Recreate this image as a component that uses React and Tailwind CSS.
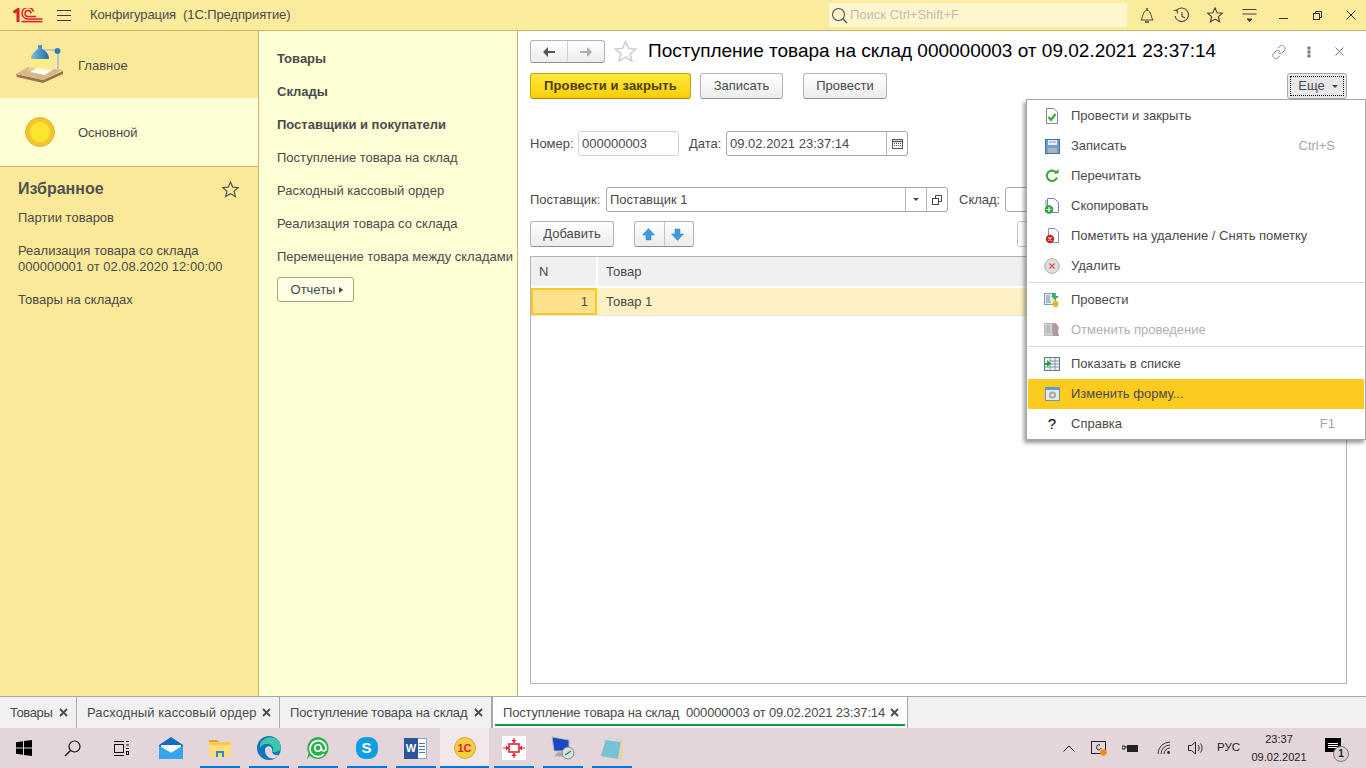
import React from 'react';

const sections = ['Поступление товара на склад', 'Расходный кассовый ордер', 'Реализация товара со склада', 'Перемещение товара между складами'];

function Logo1C() {
  return (
    <svg width="30" height="15" viewBox="0 0 30 15" fill="none" stroke="#d9232a">
      <path d="M0.5 4.5 L5 1.5 V14" strokeWidth="3" />
      <path d="M20.5 3.5 A5.8 5.8 0 1 0 14.5 11 H29.5" strokeWidth="1.6" />
      <path d="M18 5.5 A3 3 0 1 0 14.5 8.4 H23" strokeWidth="1.5" />
      <path d="M8.5 13.6 H29.5" strokeWidth="1.6" />
    </svg>
  );
}

function LampIcon() {
  return (
    <svg width="50" height="42" viewBox="0 0 50 42">
      <defs>
        <linearGradient id="glow" x1="0" y1="0" x2="0" y2="1">
          <stop offset="0" stopColor="#fff36a" />
          <stop offset="1" stopColor="#fbe99a" stopOpacity="0.3" />
        </linearGradient>
        <linearGradient id="shade" x1="0" y1="0" x2="1" y2="0">
          <stop offset="0" stopColor="#7fbfe6" />
          <stop offset="0.6" stopColor="#3d8dc4" />
          <stop offset="1" stopColor="#1f6ba3" />
        </linearGradient>
      </defs>
      <path d="M1 30 L28 36 L48 27 V30 L28 39 L2 33 Z" fill="#9a7350" />
      <path d="M1 30 L13 23 L48 26 L28 36 Z" fill="#d9b68b" />
      <path d="M15 28 L22 23.5 L38 25.5 L30 31 Z" fill="#fff" />
      <path d="M18 15 H33 L38 27 H12 Z" fill="url(#glow)" />
      <path d="M27 6 H42 M43 8 V26" stroke="#c4c4c4" strokeWidth="2" fill="none" />
      <path d="M23 1 H27 V5 C31 7 34 10 34 15 H16 C16 10 20 7 23 5 Z" fill="url(#shade)" />
      <circle cx="42.5" cy="7" r="3" fill="#2f7fb6" />
    </svg>
  );
}

function Star({ size = 18, color = '#555', fill = 'none' }) {
  return (
    <svg width={size} height={size} viewBox="0 0 24 24" fill={fill} stroke={color} strokeWidth="1.5">
      <path d="M12 2.5 L14.8 9 L21.8 9.6 L16.5 14.2 L18.1 21 L12 17.4 L5.9 21 L7.5 14.2 L2.2 9.6 L9.2 9 Z" />
    </svg>
  );
}

function TopIcon({ children }) {
  return <div className="w-[34px] h-[30px] flex items-center justify-center">{children}</div>;
}

function Btn({ children, className = '' }) {
  return (
    <div className={`h-[26px] flex items-center justify-center rounded-[3px] border border-[#b4b4b4] border-b-[#8f8f8f] bg-gradient-to-b from-white to-[#ececec] text-[#4a4a4a] ${className}`}>
      {children}
    </div>
  );
}

function MenuItem({ icon, label, hint, disabled, active }) {
  return (
    <div className={`h-[30px] flex items-center pl-[16px] pr-[29px] ${active ? 'bg-[#fbcb1f] h-[29px]' : ''}`}>
      <div className="w-[16px] h-[16px] flex items-center justify-center">{icon}</div>
      <span className={`ml-[11px] flex-1 ${disabled ? 'text-[#b0b0b0]' : 'text-[#4a4a4a]'}`}>{label}</span>
      {hint && <span className="text-[#a6a6a6]">{hint}</span>}
    </div>
  );
}

const Doc = ({ children }) => (
  <svg width="16" height="16" viewBox="0 0 16 16">
    <path d="M2.5 .5 H10 L13.5 4 V15.5 H2.5 Z" fill="#fff" stroke="#7c8794" />
    {children}
  </svg>
);

const menuIcons = {
  post: <Doc><path d="M4.5 9 L7 12 L11.5 6" stroke="#39a935" strokeWidth="2.2" fill="none" /></Doc>,
  save: (
    <svg width="15" height="15" viewBox="0 0 15 15">
      <rect x=".5" y=".5" width="14" height="14" fill="#6f9fd0" stroke="#44709f" />
      <rect x="3" y="1" width="9" height="5" fill="#e8f0f8" />
      <path d="M4 3 H11" stroke="#6f9fd0" />
      <rect x="3" y="9" width="9" height="5" fill="#a8b3bf" />
    </svg>
  ),
  reread: (
    <svg width="14" height="14" viewBox="0 0 14 14" fill="none">
      <path d="M11.5 4 A5.2 5.2 0 1 0 12 8.5" stroke="#3ca83a" strokeWidth="2.2" />
      <path d="M8.5 4.5 H13.5 V0 Z" fill="#3ca83a" />
    </svg>
  ),
  copy: (
    <svg width="16" height="16" viewBox="0 0 16 16">
      <path d="M3.5 .5 H10.5 L14.5 4.5 V14.5 H3.5 Z" fill="#fff" stroke="#7c8794" />
      <path d="M2 2 V8" stroke="#7c8794" />
      <circle cx="5" cy="11.5" r="4.3" fill="#2c9f45" />
      <path d="M5 9 V14 M2.5 11.5 H7.5" stroke="#fff" strokeWidth="1.2" />
    </svg>
  ),
  mark: (
    <svg width="16" height="16" viewBox="0 0 16 16">
      <path d="M4.5 .5 H11 L14.5 4 V14.5 H4.5 Z" fill="#fff" stroke="#8a939d" />
      <circle cx="6" cy="11" r="4.2" fill="#cc2229" />
      <path d="M4.4 9.4 L7.6 12.6 M7.6 9.4 L4.4 12.6" stroke="#fff" strokeWidth="1.1" />
    </svg>
  ),
  del: (
    <svg width="16" height="16" viewBox="0 0 16 16">
      <circle cx="8" cy="8" r="7.4" fill="#dedede" stroke="#b0b0b0" />
      <path d="M5.5 5.5 L10.5 10.5 M10.5 5.5 L5.5 10.5" stroke="#e8454b" strokeWidth="1.1" />
    </svg>
  ),
  doPost: (
    <svg width="16" height="16" viewBox="0 0 16 16">
      <rect x=".5" y="1.5" width="11" height="11" fill="#e6eef3" stroke="#7fa0b5" />
      <path d="M2 4 H6 M2 6 H6 M2 8 H6 M2 10 H7" stroke="#6a8ba1" />
      <path d="M8 1 H11 V4 H15 L11 8 L7 4 H8 Z" fill="#36b25a" />
      <ellipse cx="11.5" cy="10" rx="3" ry="1.3" fill="#e8c23a" />
      <ellipse cx="11.5" cy="12" rx="3" ry="1.3" fill="#dcae27" />
      <ellipse cx="11.5" cy="14" rx="3" ry="1.3" fill="#e8c23a" />
    </svg>
  ),
  undoPost: (
    <svg width="16" height="16" viewBox="0 0 16 16">
      <rect x=".5" y="1.5" width="11" height="12" fill="#cfcfcf" stroke="#bdbdbd" />
      <path d="M2 4 H6 M2 6 H6 M2 8 H6 M2 10 H7" stroke="#aaaaaa" />
      <path d="M9 1 C14 1 16 6 14 9 L15 14 H9 L8 6 Z" fill="#b29a9a" />
    </svg>
  ),
  list: (
    <svg width="16" height="14" viewBox="0 0 16 14">
      <rect x=".5" y=".5" width="15" height="13" fill="#f2f5f7" stroke="#5a7c8f" />
      <path d="M6 1 V13 M11 1 V13 M6 4 H15 M6 7 H15 M6 10 H15 M1 10 H6" stroke="#7c98a8" />
      <path d="M0 6 H3 V3 L7 6.5 L3 10 V8 H0 Z" fill="#22a03f" />
    </svg>
  ),
  form: (
    <svg width="15" height="14" viewBox="0 0 15 14">
      <rect x=".5" y=".5" width="14" height="13" fill="#e4eaee" stroke="#6f93b5" />
      <rect x="1" y="1" width="13" height="2" fill="#5ca0dc" />
      <circle cx="7.5" cy="8" r="3.6" fill="#a9a9a9" />
      <circle cx="7.5" cy="8" r="1.5" fill="#e4eaee" />
    </svg>
  ),
};

function Arrow({ up, color = '#444', w = 14 }) {
  return (
    <svg width={w} height="12" viewBox="0 0 14 12" fill={color}>
      {up ? <path d="M1 6 L6 1 V5 H13 V7 H6 V11 Z" /> : <path d="M13 6 L8 1 V5 H1 V7 H8 V11 Z" />}
    </svg>
  );
}

function BlueArrow({ down }) {
  return (
    <svg width="13" height="13" viewBox="0 0 13 13" fill="#3f9bdc" stroke="#2c7fbd" strokeWidth=".5">
      {down ? <path d="M4 1 H9 V6 H12.5 L6.5 12.5 L.5 6 H4 Z" /> : <path d="M4 12 H9 V7 H12.5 L6.5 .5 L.5 7 H4 Z" />}
    </svg>
  );
}

function Tab({ label, active, className = '' }) {
  return (
    <div className={`h-[31px] flex items-center border-r border-[#a8a8a8] ${active ? 'bg-white border-l relative' : ''} ${className}`}>
      <span className="whitespace-pre pl-[10px]">{label}</span>
      <svg className="ml-auto mr-[8px] shrink-0" width="9" height="9" viewBox="0 0 9 9" stroke="#4a4a4a" strokeWidth="1.8">
        <path d="M1 1 L8 8 M8 1 L1 8" />
      </svg>
      {active && <div className="absolute left-[2px] right-[2px] bottom-[2px] h-[2px] bg-[#0d9a48]" />}
    </div>
  );
}

function TaskIcon({ children, running, active, className = '' }) {
  return (
    <div className={`w-[49px] h-[40px] flex items-center justify-center relative ${active ? 'bg-[#f0e8ea]' : ''} ${className}`}>
      {children}
      {running && <div className={`absolute bottom-0 h-[2px] bg-[#0078d7] ${active ? 'left-0 right-0' : 'left-[5px] right-[4px]'}`} />}
    </div>
  );
}

export default function App() {
  return (
    <div className="w-[1366px] h-[768px] overflow-hidden relative flex flex-col bg-white text-[13px] text-[#4a4a4a] font-['Liberation_Sans',Arial,sans-serif]">
      {/* верхняя панель */}
      <div className="h-[31px] shrink-0 flex items-center bg-[#fbeb9c] border-b border-[#c9b765]">
        <div className="ml-[13px] w-[30px] flex"><Logo1C /></div>
        <svg className="ml-[13px]" width="16" height="13" viewBox="0 0 16 13" stroke="#3f3f3f"><path d="M1 1.5 H15 M1 6.5 H15 M1 11.5 H15" /></svg>
        <span className="ml-[18px] whitespace-pre tracking-[-0.1px]">Конфигурация  (1С:Предприятие)</span>
        <div className="ml-auto w-[298px] h-[24px] rounded-[2px] bg-[#fdf6cf] flex items-center pl-[2px]">
          <svg width="17" height="17" viewBox="0 0 17 17" fill="none" stroke="#555" strokeWidth="1.1">
            <circle cx="7.5" cy="7.5" r="6" />
            <path d="M12 12 L16 16" strokeWidth="1.5" />
          </svg>
          <span className="ml-[2px] text-[#c3bfa8]">Поиск Ctrl+Shift+F</span>
        </div>
        <div className="ml-[3px] -mr-[2px] flex items-center">
          <TopIcon>
            <svg width="16" height="17" viewBox="0 0 16 17" fill="none" stroke="#444">
              <path d="M2 13 C4 11 3.5 4 8 3 C12.5 4 12 11 14 13 Z" />
              <path d="M8 1 V3 M6 15 H10" strokeWidth="1.4" />
            </svg>
          </TopIcon>
          <TopIcon>
            <svg width="17" height="17" viewBox="0 0 17 17" fill="none" stroke="#444" strokeWidth="1.1">
              <path d="M3 4 A6.8 6.8 0 1 1 2 9" />
              <path d="M.5 3.5 L4 3 L4.5 6.5" />
              <path d="M9 5 V9.5 L12 11" />
            </svg>
          </TopIcon>
          <TopIcon><Star size={18} color="#444" /></TopIcon>
          <TopIcon>
            <svg width="15" height="15" viewBox="0 0 15 15" stroke="#444" fill="#444">
              <path d="M.5 1.5 H14.5 M.5 6 H14.5" />
              <path d="M5 11 H10 L7.5 13.5 Z" />
            </svg>
          </TopIcon>
          <TopIcon>
            <svg width="9" height="10" viewBox="0 0 9 10" stroke="#333"><path d="M0 8.5 H9" /></svg>
          </TopIcon>
          <TopIcon>
            <svg width="9" height="9" viewBox="0 0 9 9" fill="none" stroke="#333">
              <rect x=".5" y="2.5" width="6" height="6" />
              <path d="M2.5 2.5 V.5 H8.5 V6.5 H6.5" />
            </svg>
          </TopIcon>
          <TopIcon>
            <svg width="10" height="10" viewBox="0 0 10 10" stroke="#333"><path d="M.5 .5 L9.5 9.5 M9.5 .5 L.5 9.5" /></svg>
          </TopIcon>
        </div>
      </div>

      <div className="flex flex-1 min-h-0">
        {/* разделы */}
        <div className="w-[259px] shrink-0 bg-[#fbe99a] border-r border-[#c9b765] flex flex-col">
          <div className="h-[67px] flex items-center pl-[15px]">
            <LampIcon />
            <span className="ml-[13px] pt-[2px]">Главное</span>
          </div>
          <div className="h-[69px] flex items-center bg-[#ffffd6] border-b border-[#c9b765] pl-[26px]">
            <div className="w-[28px] h-[28px] rounded-full bg-[#fde52e] border-[4px] border-[#f4c62c] outline outline-1 outline-[#d9ab22]" />
            <span className="ml-[24px] pt-[1px]">Основной</span>
          </div>
          <div className="pl-[18px] pr-[18px] pt-[12px]">
            <div className="flex items-center justify-between h-[20px]">
              <span className="text-[16px] font-bold text-[#505050]">Избранное</span>
              <Star size={19} color="#555" />
            </div>
            <div className="mt-[11px] leading-[16px]">Партии товаров</div>
            <div className="mt-[17px] leading-[16px]">Реализация товара со склада<br />000000001 от 02.08.2020 12:00:00</div>
            <div className="mt-[17px] leading-[16px]">Товары на складах</div>
          </div>
        </div>

        <div className="w-[259px] shrink-0 bg-[#ffffd6] border-r border-[#c9b765] pl-[18px] pt-[11px]">
          <div className="h-[33px] flex items-center font-bold">Товары</div>
          <div className="h-[33px] flex items-center font-bold">Склады</div>
          <div className="h-[33px] flex items-center font-bold">Поставщики и покупатели</div>
          {sections.map((s) => (
            <div key={s} className="h-[33px] flex items-center whitespace-nowrap">{s}</div>
          ))}
          <div className="mt-[4px] w-[77px] h-[25px] flex items-center justify-center pl-[3px] rounded-[3px] border border-[#a9a679] bg-[#ffffe6]">
            Отчеты
            <svg className="ml-[4px]" width="4" height="6" viewBox="0 0 4 6" fill="#444"><path d="M0 0 L4 3 L0 6 Z" /></svg>
          </div>
        </div>

        {/* форма документа */}
        <div className="flex-1 min-w-0 pl-[12px] pr-[19px] pt-[9px] pb-[12px] flex flex-col">
          <div className="h-[23px] flex items-center">
            <div className="w-[75px] h-[23px] flex rounded-[3px] border border-[#b4b4b4] border-b-[#8f8f8f] bg-gradient-to-b from-white to-[#ececec]">
              <div className="w-[37px] flex items-center justify-center border-r border-[#cfcfcf]"><Arrow up color="#555" /></div>
              <div className="flex-1 flex items-center justify-center"><Arrow color="#adadad" /></div>
            </div>
            <div className="ml-[8px]"><Star size={25} color="#cfcfcf" /></div>
            <span className="ml-[10px] text-[19px] text-black whitespace-nowrap">Поступление товара на склад 000000003 от 09.02.2021 23:37:14</span>
            <div className="ml-auto flex items-center">
              <svg width="16" height="16" viewBox="0 0 16 16" fill="none" stroke="#8a8a8a">
                <path d="M7 4 L10 1.5 C12 .5 15 3.5 14 6 L11 9 C9.5 10 8 9.5 7 8.5" />
                <path d="M9 12 L6 14.5 C4 15.5 1 12.5 2 10 L5 7 C6.5 6 8 6.5 9 7.5" />
              </svg>
              <svg className="ml-[20px]" width="4" height="12" viewBox="0 0 4 12" fill="#777">
                <rect x=".5" y=".5" width="3" height="3" />
                <rect x=".5" y="4.5" width="3" height="3" />
                <rect x=".5" y="8.5" width="3" height="3" />
              </svg>
              <svg className="ml-[24px]" width="9" height="9" viewBox="0 0 9 9" stroke="#777"><path d="M.5 .5 L8.5 8.5 M8.5 .5 L.5 8.5" /></svg>
              <div className="w-[3px]" />
            </div>
          </div>

          <div className="mt-[10px] flex items-center">
            <div className="w-[161px] h-[26px] flex items-center justify-center rounded-[3px] border border-[#c9a400] border-b-[#a98a00] bg-gradient-to-b from-[#ffe93b] to-[#fbcd00] font-bold text-[#4a4000] tracking-[0.15px]">Провести и закрыть</div>
            <Btn className="ml-[9px] w-[83px]">Записать</Btn>
            <Btn className="ml-[20px] w-[84px]">Провести</Btn>
            <div className="ml-auto w-[60px] h-[26px] p-[2px] rounded-[3px] border border-[#a8a8a8] bg-[#e8e8e8]">
              <div className="h-full flex items-center justify-center pl-[2px] border border-dotted border-black">
                Еще
                <svg className="ml-[7px]" width="6" height="3" viewBox="0 0 6 3" fill="#444"><path d="M0 0 H6 L3 3 Z" /></svg>
              </div>
            </div>
          </div>

          <div className="mt-[32px] h-[25px] flex items-center">
            <span className="w-[48px]">Номер:</span>
            <div className="w-[101px] h-[25px] flex items-center pl-[3px] rounded-[3px] border border-[#d5d5d5]">000000003</div>
            <span className="ml-[10px] w-[37px]">Дата:</span>
            <div className="w-[182px] h-[25px] flex rounded-[3px] border border-[#a6a6a6]">
              <div className="flex-1 flex items-center pl-[3px]">09.02.2021 23:37:14</div>
              <div className="w-[21px] flex items-center justify-center border-l border-[#b4b4b4]">
                <svg width="11" height="11" viewBox="0 0 11 11" fill="none" stroke="#555">
                  <rect x=".5" y="1.5" width="10" height="9" />
                  <path d="M.5 3.5 H10.5" strokeWidth="1.4" />
                  <path d="M2 5.5 H9 M2 7.5 H9" strokeDasharray="1 1" />
                </svg>
              </div>
            </div>
          </div>

          <div className="mt-[31px] h-[25px] flex items-center">
            <span className="w-[76px] whitespace-nowrap">Поставщик:</span>
            <div className="w-[342px] h-[25px] flex rounded-[3px] border border-[#a6a6a6]">
              <div className="flex-1 flex items-center pl-[3px]">Поставщик 1</div>
              <div className="w-[21px] flex items-center justify-center border-l border-[#b4b4b4]">
                <svg width="6" height="3" viewBox="0 0 6 3" fill="#444"><path d="M0 0 H6 L3 3 Z" /></svg>
              </div>
              <div className="w-[21px] flex items-center justify-center border-l border-[#b4b4b4]">
                <svg width="10" height="10" viewBox="0 0 10 10" fill="none" stroke="#444">
                  <rect x=".5" y="3.5" width="6" height="6" />
                  <path d="M3.5 3.5 V.5 H9.5 V6.5 H6.5" />
                </svg>
              </div>
            </div>
            <span className="ml-[11px] w-[46px]">Склад:</span>
            <div className="flex-1 h-[25px] rounded-[3px] border border-[#a6a6a6]" />
          </div>

          <div className="mt-[9px] h-[26px] flex items-center">
            <Btn className="w-[84px]">Добавить</Btn>
            <div className="ml-[20px] w-[60px] h-[26px] flex rounded-[3px] border border-[#b4b4b4] border-b-[#8f8f8f] bg-gradient-to-b from-white to-[#ececec]">
              <div className="w-[30px] flex items-center justify-center pr-[2px] border-r border-[#c4c4c4]"><BlueArrow /></div>
              <div className="flex-1 flex items-center justify-center pr-[3px]"><BlueArrow down /></div>
            </div>
            <div className="ml-auto w-[330px] h-[26px] rounded-[3px] border border-[#c4c4c4]" />
          </div>

          <div className="mt-[9px] flex-1 min-h-0 border border-[#b4b4b4]">
            <div className="h-[31px] flex bg-[#f0f0f0] border-b-2 border-white">
              <div className="w-[67px] flex items-center pl-[8px] border-r-2 border-white">N</div>
              <div className="flex-1 flex items-center pl-[8px]">Товар</div>
            </div>
            <div className="h-[28px] flex bg-[#fdf1c4] border-b border-[#e4e4e4]">
              <div className="w-[66px] flex items-center justify-end pt-[1px] pr-[7px] bg-[#fde28e] border-2 border-[#fac81e]">1</div>
              <div className="flex-1 flex items-center pt-[1px] pl-[9px]">Товар 1</div>
            </div>
          </div>
        </div>
      </div>

      {/* открытые окна */}
      <div className="h-[32px] shrink-0 flex bg-[#f1f1f1] border-t border-[#a8a8a8]">
        <Tab label="Товары" className="w-[77px] tracking-[-0.4px]" />
        <Tab label="Расходный кассовый ордер" className="w-[203px] tracking-[0.1px]" />
        <Tab label="Поступление товара на склад" className="w-[212px] tracking-[-0.12px]" />
        <Tab label="Поступление товара на склад  000000003 от 09.02.2021 23:37:14" active className="w-[416px] tracking-[-0.17px]" />
      </div>

      {/* панель задач Windows */}
      <div className="h-[40px] shrink-0 flex items-center bg-[#e3d5d9] overflow-hidden">
        <TaskIcon className="-ml-px">
          <svg width="16" height="16" viewBox="0 0 16 16" fill="#000">
            <path d="M0 2.2 L7 1.2 V7.5 H0 Z M8 1 L16 0 V7.5 H8 Z M0 8.5 H7 V14.8 L0 13.8 Z M8 8.5 H16 V16 L8 15 Z" />
          </svg>
        </TaskIcon>
        <TaskIcon>
          <svg width="17" height="17" viewBox="0 0 17 17" fill="none" stroke="#111" strokeWidth="1.2">
            <circle cx="10.5" cy="6.5" r="5.5" />
            <path d="M6.5 10.5 L1 16" strokeWidth="1.5" />
          </svg>
        </TaskIcon>
        <TaskIcon>
          <svg width="17" height="15" viewBox="0 0 17 15" fill="none" stroke="#111">
            <path d="M1 .5 H11 M1 14.5 H11" />
            <rect x="1.5" y="3.5" width="9" height="8" />
            <path d="M13 .5 H16 M13 4 H16 M13 7.5 H16" strokeWidth="1.2" />
            <rect x="13.5" y="10.5" width="2" height="3" />
          </svg>
        </TaskIcon>
        <TaskIcon>
          <svg width="24" height="22" viewBox="0 0 24 22">
            <path d="M12 0 L24 8 V22 H0 V8 Z" fill="#0f6fc6" />
            <path d="M2 8 H22 V10 L12 16 L2 10 Z" fill="#fff" />
            <path d="M0 9 L12 16 L24 9 V22 H0 Z" fill="#35a6ee" />
          </svg>
        </TaskIcon>
        <TaskIcon running>
          <svg width="22" height="19" viewBox="0 0 22 19">
            <path d="M0 1 H8 L10 3 H22 V18 H0 Z" fill="#fdc94e" />
            <path d="M0 1 H8 L10 3 H0 Z" fill="#e1a52a" />
            <path d="M0 6 H22 V18 H0 Z" fill="#ffdd7a" />
            <path d="M7 12 H15 V18 H7 Z" fill="#2f86d1" />
            <path d="M9 14 H13 V18 H9 Z" fill="#ffdd7a" />
          </svg>
        </TaskIcon>
        <TaskIcon running>
          <svg width="24" height="24" viewBox="0 0 24 24">
            <circle cx="12" cy="12" r="12" fill="#0f75bd" />
            <path d="M3 8 C7 -1 23 -2 24 12 C24 15 20 16 15 16 C18 12 15 8 10 8 C6 8 4 10 3 13 Z" fill="#3ec6a8" />
            <path d="M8 14 C8 9 16 9 15 15 C15 19 20 20 22 19 C18 25 8 23 8 14 Z" fill="#e3d5d9" />
          </svg>
        </TaskIcon>
        <TaskIcon running>
          <svg width="24" height="24" viewBox="0 0 24 24" fill="none">
            <path d="M12 1 A11 11 0 1 1 4 20 L1 23 L2.5 17 A11 11 0 0 1 12 1 Z" fill="#2bb24c" />
            <path d="M18 18 A8 8 0 1 1 20 12 C20 16 15.5 16 15.5 12" stroke="#fff" strokeWidth="1.6" />
            <circle cx="12" cy="12" r="3.2" stroke="#fff" strokeWidth="1.6" />
          </svg>
        </TaskIcon>
        <TaskIcon running>
          <div className="w-[22px] h-[22px] rounded-[9px] bg-[#0e9fe0] flex items-center justify-center text-white text-[15px] font-bold">S</div>
        </TaskIcon>
        <TaskIcon running>
          <div className="relative w-[23px] h-[21px] bg-white border border-[#8aa3c7] flex flex-col items-end justify-center gap-[2px] pr-[1px]">
            <div className="w-[6px] h-px bg-[#4f78b3]" />
            <div className="w-[6px] h-px bg-[#4f78b3]" />
            <div className="w-[6px] h-px bg-[#4f78b3]" />
            <div className="w-[6px] h-px bg-[#4f78b3]" />
            <div className="absolute left-[-1px] top-[-1px] w-[14px] h-[21px] bg-[#2a5699] flex items-center justify-center text-white text-[11px] font-bold">W</div>
          </div>
        </TaskIcon>
        <TaskIcon running active>
          <div className="w-[22px] h-[22px] rounded-full bg-[#f7cf45] border border-[#d9a92b] flex items-center justify-center text-[#d9232a] text-[11px] font-bold">1С</div>
        </TaskIcon>
        <TaskIcon running>
          <svg width="24" height="24" viewBox="0 0 24 24">
            <rect width="24" height="24" fill="#fff" />
            <rect x="7" y="8" width="10" height="8" fill="#fff" stroke="#e8202a" strokeWidth="1.6" />
            <path d="M12 2 V7 M12 17 V22 M1 12 H6 M18 12 H23" stroke="#e8202a" strokeWidth="1.2" />
            <path d="M9.5 4 H14.5 L12 7 Z M9.5 20 H14.5 L12 17 Z M4 9.5 V14.5 L7 12 Z M20 9.5 V14.5 L17 12 Z" fill="#e8202a" />
          </svg>
        </TaskIcon>
        <TaskIcon running>
          <svg width="24" height="24" viewBox="0 0 24 24">
            <path d="M1 1 L18 4 V15 L3 15 Z" fill="#1b46c2" stroke="#b0b8c2" />
            <path d="M7 16 L14 17 L16 21 L3 20 Z" fill="#a9a9a9" />
            <circle cx="17" cy="17" r="6" fill="#d8dee0" stroke="#7e8a8f" />
            <path d="M14 19 L20 15" stroke="#2e8b3a" strokeWidth="1.4" />
          </svg>
        </TaskIcon>
        <TaskIcon running>
          <svg width="24" height="23" viewBox="0 0 24 23">
            <path d="M6 1 L23 3 V22 L19 23 Z" fill="#e6d5a8" />
            <path d="M6 1 L21 3 L18 22 L1 19 Z" fill="#76c2d6" />
            <path d="M6 1 L21 3 L20.5 5 L5.5 3 Z" fill="#dcdcdc" />
          </svg>
        </TaskIcon>

        <div className="ml-auto flex items-center text-[#222]">
          <svg width="12" height="7" viewBox="0 0 12 7" fill="none" stroke="#222"><path d="M.5 6.5 L6 1 L11.5 6.5" /></svg>
          <svg className="ml-[16px]" width="17" height="16" viewBox="0 0 17 16" fill="none" stroke="#222">
            <rect x=".5" y="1.5" width="14" height="12" />
            <path d="M9 5 C6 4 5 7 6 9 M6 9 C8 11 10 9 10 8" />
            <circle cx="12.5" cy="12.5" r="3.3" fill="#ff8c00" stroke="none" />
          </svg>
          <svg className="ml-[14px]" width="16" height="10" viewBox="0 0 16 10" fill="#222">
            <rect x="5" y="2" width="11" height="7" />
            <path d="M0 3 H3 V6 H0 Z M3 4 H5" stroke="#222" fill="none" />
          </svg>
          <svg className="ml-[19px]" width="15" height="14" viewBox="0 0 15 14" fill="none" stroke="#333">
            <path d="M1 13 A12 12 0 0 1 13 1 M4 13 A9 9 0 0 1 13 4 M7 13 A6 6 0 0 1 13 7" />
            <circle cx="11.5" cy="11.5" r="1.4" fill="#222" stroke="none" />
          </svg>
          <svg className="ml-[16px]" width="16" height="14" viewBox="0 0 16 14" fill="none" stroke="#222">
            <path d="M.5 4.5 H3.5 L7.5 1 V13 L3.5 9.5 H.5 Z" />
            <path d="M10 4 C11.5 6 11.5 8 10 10 M12.5 2.5 C14.5 5 14.5 9 12.5 11.5" />
          </svg>
          <span className="ml-[13px] text-[11.5px]">РУС</span>
          <div className="ml-[11px] w-[56px] text-center leading-[18px] text-[11px]">23:37<br />09.02.2021</div>
          <div className="relative ml-[18px] mr-[24px] w-[17px] h-[22px]">
            <div className="w-[16px] h-[14px] bg-black mt-[1px] flex flex-col items-center justify-center gap-[1px]">
              <div className="w-[10px] h-px bg-white" />
              <div className="w-[10px] h-px bg-white" />
              <div className="w-[10px] h-px bg-white" />
            </div>
            <div className="absolute left-[8px] top-[9px] w-[16px] h-[16px] rounded-full bg-[#d8d0d2] border border-[#777] flex items-center justify-center text-[10px] font-bold leading-none">1</div>
          </div>
        </div>
      </div>

      {/* выпадающее меню Еще */}
      <div className="absolute left-[1026px] top-[99px] w-[340px] h-[341px] bg-white border border-[#a6a6a6] shadow-[-2px_3px_4px_rgba(0,0,0,0.4)] p-px">
        <MenuItem icon={menuIcons.post} label="Провести и закрыть" />
        <MenuItem icon={menuIcons.save} label="Записать" hint="Ctrl+S" />
        <MenuItem icon={menuIcons.reread} label="Перечитать" />
        <MenuItem icon={menuIcons.copy} label="Скопировать" />
        <MenuItem icon={menuIcons.mark} label="Пометить на удаление / Снять пометку" />
        <MenuItem icon={menuIcons.del} label="Удалить" />
        <div className="my-[1px] h-px bg-[#e0d9c6]" />
        <div className="h-[1px]" />
        <MenuItem icon={menuIcons.doPost} label="Провести" />
        <MenuItem icon={menuIcons.undoPost} label="Отменить проведение" disabled />
        <div className="my-[1px] h-px bg-[#e0d9c6]" />
        <div className="h-[1px]" />
        <MenuItem icon={menuIcons.list} label="Показать в списке" />
        <MenuItem icon={menuIcons.form} label="Изменить форму..." active />
        <MenuItem icon={<span className="text-[15px] text-black font-medium">?</span>} label="Справка" hint="F1" />
      </div>
    </div>
  );
}
